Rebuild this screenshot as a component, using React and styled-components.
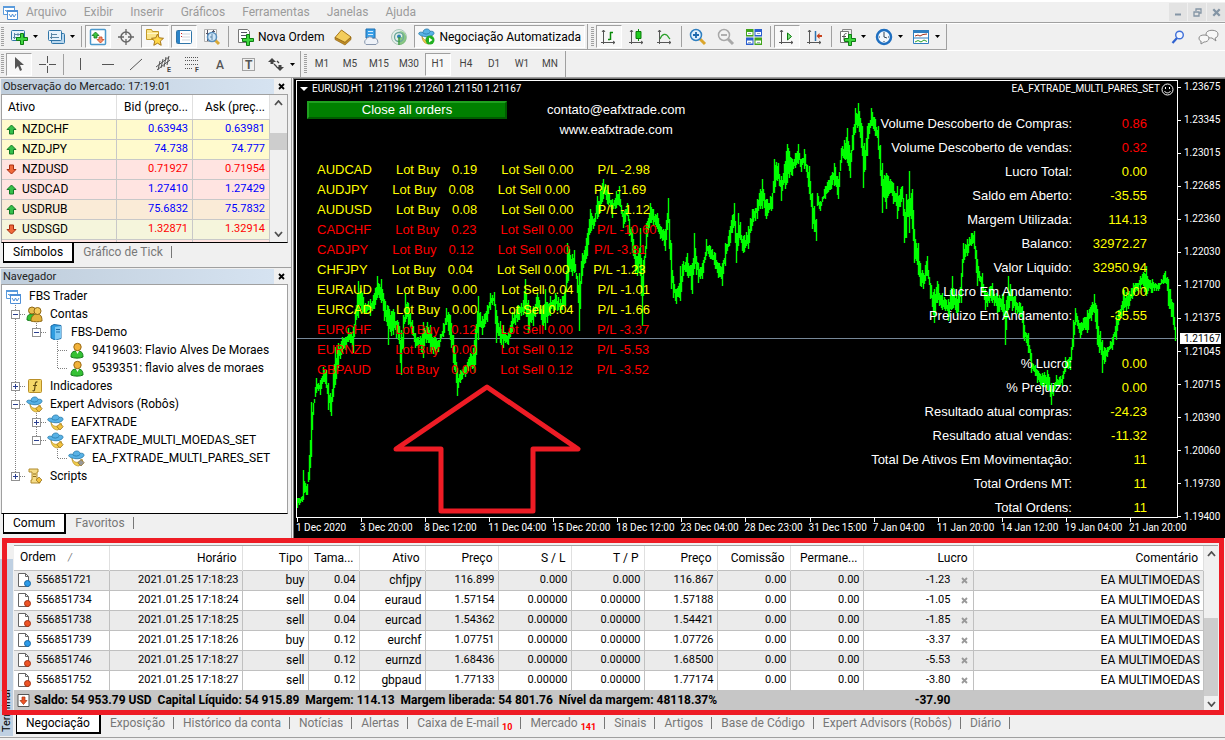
import React, { useState } from 'react';
import styled, { createGlobalStyle, css } from 'styled-components';

const GlobalStyle = createGlobalStyle`
  * { box-sizing: border-box; }
  body {
    margin: 0;
    background: #f0f0f0;
    color: #000;
    font-family: Roboto, 'Open Sans', sans-serif;
    font-size: 12px;
    line-height: 18px;
  }
  button {
    font: inherit;
    color: inherit;
    background: none;
    border: none;
    padding: 0;
    cursor: default;
  }
  ul { list-style: none; margin: 0; padding: 0; }
  svg { display: block; flex-shrink: 0; }
`;

const Window = styled.div`
  display: flex;
  flex-direction: column;
  min-height: 100vh;
  border-top: 2px solid #fff;
  overflow: hidden;
`;

/* menu */

const MenuBar = styled.nav`
  display: flex;
  align-items: center;
  height: 21px;
  padding-left: 3px;
  border-bottom: 1px solid #a0a0a0;
`;

const MenuItem = styled.button`
  color: #9b9b9b;
  margin-left: ${({ $first }) => ($first ? '8px' : '17px')};
`;

const WindowButtons = styled.div`
  display: flex;
  gap: 1px;
  margin-left: auto;
  button {
    display: flex;
    align-items: center;
    justify-content: center;
    width: 18px;
    height: 18px;
    background: #e3e3e3;
  }
`;

/* toolbars */

const ToolRow = styled.div`
  display: flex;
  align-items: center;
  height: 27px;
  border-top: 1px solid #fff;
`;

const ToolBar = styled.div`
  display: flex;
  align-items: center;
  height: 26px;
  gap: 2px;
  padding: 0 2px 0 4px;
  border-right: 1px solid #a0a0a0;
  border-bottom: ${({ $line }) => ($line ? '1px solid #a0a0a0' : 'none')};
  & + & { padding-left: 6px; }
`;

const Grip = styled.span`
  width: 3px;
  height: 20px;
  margin-left: -3px;
  background: repeating-linear-gradient(#a0a0a0 0 1px, #f0f0f0 1px 2px);
`;

const ToolButton = styled.button`
  display: flex;
  align-items: center;
  justify-content: center;
  gap: 4px;
  height: 23px;
  min-width: 26px;
  padding: 0 3px;
  border: 1px solid transparent;
  ${({ $drop }) => $drop && css`
    width: 35px;
    gap: 5px;
  `}
  ${({ $pressed }) => $pressed && css`
    background: #f8f8f8;
    border-color: #a0a0a0 #fff #fff #a0a0a0;
  `}
  ${({ $small }) => $small && css`
    font-size: 10px;
    color: #444;
  `}
`;

const Divider = styled.span`
  width: 1px;
  height: 21px;
  margin: 0 1px;
  background: #a0a0a0;
`;

const ToolRight = styled.div`
  display: flex;
  align-items: center;
  gap: 13px;
  margin-left: auto;
  padding-right: 6px;
`;

/* workspace */

const Workspace = styled.div`
  display: grid;
  grid-template-columns: 292px minmax(0, 1fr);
  flex: 1;
  border-top: 1px solid #a0a0a0;
`;

const SideColumn = styled.div`
  display: flex;
  flex-direction: column;
  border-right: 1px solid #a0a0a0;
`;

const Panel = styled.section`
  display: flex;
  flex-direction: column;
  flex: ${({ $grow }) => ($grow ? 1 : 'none')};
  padding: 1px 3px 2px 1px;
  border-top: ${({ $grow }) => ($grow ? '1px solid #a0a0a0' : 'none')};
`;

const PanelTitle = styled.header`
  display: flex;
  align-items: center;
  justify-content: space-between;
  height: 15px;
  background: linear-gradient(90deg, #bfcddb, #d7e4f2);
  h2 { margin: 0; padding-left: 2px; font-size: 11px; font-weight: 400; color: #222; }
  button {
    display: flex;
    align-items: center;
    justify-content: center;
    width: 14px;
    height: 15px;
    background: #f0f0f0;
  }
`;

const PanelBody = styled.div`
  display: flex;
  align-items: flex-start;
  flex: ${({ $fixed }) => ($fixed ? 'none' : 1)};
  background: #fff;
  border: 1px solid #a0a0a0;
  border-bottom-color: #000;
  overflow: hidden;
`;

const MarketBody = styled(PanelBody)`
  height: 149px;
`;

const MarketTable = styled.table`
  flex: 1;
  border-collapse: collapse;
  table-layout: fixed;
  th {
    height: 24px;
    padding: 0 4px;
    font-weight: 400;
    text-align: right;
    border-right: 1px solid #e0e0e0;
    border-bottom: 1px solid #c8c8c8;
  }
  th:first-child { text-align: left; padding-left: 6px; }
  td {
    height: 20px;
    padding: 0 4px 0 0;
    border-right: 1px solid #c8c8c8;
    border-bottom: 1px solid #c8c8c8;
    text-align: right;
    font-size: 11px;
  }
  td:first-child { text-align: left; padding-left: 4px; font-size: 12px; }
`;

const MarketRow = styled.tr`
  background: ${({ $bg }) => $bg};
  color: ${({ $up }) => ($up ? '#0000ff' : '#ff0000')};
`;

const SymbolName = styled.span`
  display: flex;
  align-items: center;
  gap: 5px;
  color: #000;
`;

const ScrollBar = styled.div`
  display: flex;
  flex-direction: column;
  align-items: center;
  align-self: stretch;
  width: ${({ $w }) => $w}px;
  padding: 5px 0;
  background: #f0f0f0;
`;

const Thumb = styled.span`
  width: 100%;
  height: ${({ $h }) => $h}px;
  margin-top: ${({ $end }) => ($end ? 'auto' : '27px')};
  margin-bottom: ${({ $end }) => ($end ? '5px' : 'auto')};
  background: #cdcdcd;
`;

const TabRow = styled.div`
  display: flex;
  align-items: flex-start;
  height: 22px;
  padding-left: 2px;
  color: #777;
`;

const Tab = styled.button`
  height: ${({ $active }) => ($active ? '20px' : '18px')};
  padding: 0 9px;
  white-space: nowrap;
  ${({ $active }) => $active ? css`
    background: #fff;
    color: #000;
    border: 1px solid #000;
    border-top: none;
    border-right-width: 2px;
    border-bottom-width: 2px;
  ` : css`
    background: linear-gradient(#777, #777) right center / 1px 12px no-repeat;
  `}
  sub {
    color: #ff0000;
    font-size: 9px;
    font-weight: 700;
    line-height: 0;
    margin-left: 3px;
  }
`;

const Tree = styled.ul`
  flex: 1;
  min-height: 227px;
  padding-top: 2px;
`;

const TreeRow = styled.li`
  display: flex;
  align-items: center;
  height: 18px;
  padding-left: 3px;
  white-space: nowrap;
`;

const TreeIcon = styled.span`
  display: flex;
  justify-content: center;
  width: 17px;
  margin-right: 7px;
`;

/* chart */

const ChartFrame = styled.section`
  display: grid;
  grid-template-columns: minmax(0, 1fr) 47px;
  grid-template-rows: 1fr 20px;
  margin-left: 1px;
  padding: 1px 0 0 2px;
  background: #000;
  border-top: 1px solid #777;
  border-left: 1px solid #777;
  color: #fff;
  font-size: 10px;
`;

const Plot = styled.div`
  position: relative;
  border: 1px solid #fff;
  > svg.price { width: 100%; height: 100%; position: absolute; inset: 0; }
`;

const ChartTitle = styled.div`
  position: absolute;
  top: 0;
  left: 3px;
  right: 3px;
  display: flex;
  align-items: center;
  gap: 4px;
  height: 16px;
  white-space: pre;
  .expert { margin-left: auto; display: flex; align-items: center; gap: 1px; }
`;

const CloseAll = styled.button`
  position: absolute;
  top: 20px;
  left: 10px;
  width: 200px;
  height: 18px;
  background: #008000;
  color: #fff;
  font: 13px/14px 'Liberation Sans', Arial, sans-serif;
  border: 2px solid;
  border-color: #20a020 #005c00 #005c00 #20a020;
`;

const Contact = styled.div`
  position: absolute;
  top: 19px;
  left: 250px;
  display: flex;
  flex-direction: column;
  align-items: center;
  font: 13px/20px 'Liberation Sans', Arial, sans-serif;
`;

const PairList = styled.ul`
  position: absolute;
  top: 79px;
  left: 20px;
  font: 13px/20px 'Liberation Sans', Arial, sans-serif;
`;

const PairItem = styled.li`
  display: flex;
  gap: 24px;
  white-space: nowrap;
  color: ${({ $red }) => ($red ? '#ff0000' : '#ffff00')};
  .lot { display: flex; gap: 12px; }
`;

const Summary = styled.dl`
  position: absolute;
  top: 31px;
  right: 30px;
  display: grid;
  grid-template-columns: auto 75px;
  margin: 0;
  text-align: right;
  font: 13px/24px 'Liberation Sans', Arial, sans-serif;
  dt { min-height: 24px; }
  dd { margin: 0; color: #ffff00; }
  dd.red { color: #ff0000; }
`;

const ArrowMark = styled.svg`
  position: absolute;
  left: 95px;
  bottom: 1px;
  width: 190px;
  height: 134px;
`;

const PriceAxis = styled.div`
  position: relative;
  display: flex;
  flex-direction: column;
  justify-content: space-between;
  margin-bottom: -6px;
  line-height: 14px;
  span { display: flex; align-items: center; gap: 3px; }
  span::before { content: ''; width: 3px; height: 1px; background: #fff; }
`;

const PriceTag = styled.b`
  position: absolute;
  top: 253px;
  left: 2px;
  width: 41px;
  padding-left: 4px;
  background: #fff;
  color: #000;
  font-weight: 400;
  line-height: 11px;
`;

const TimeAxis = styled.div`
  grid-column: 1 / -1;
  display: grid;
  grid-template-columns: repeat(14, 1fr);
  margin-right: 32px;
  white-space: nowrap;
  span::before { content: ''; display: block; width: 1px; height: 4px; margin-left: 1px; background: #fff; }
  span { line-height: 12px; }
`;

/* terminal */

const Terminal = styled.section`
  position: relative;
  display: flex;
  height: 200px;
  border-bottom: 1px solid #a0a0a0;
  margin-bottom: 2px;
`;

const RedFrame = styled.div`
  position: absolute;
  top: 0;
  left: 2px;
  right: 1px;
  height: 177px;
  border: 5px solid #ee1c25;
  pointer-events: none;
`;

const SideStrip = styled.h2`
  width: 13px;
  margin: 21px 1px 1px 0;
  padding: 4px 0;
  background: #bfd0e2;
  font-size: 11px;
  font-weight: 400;
  line-height: 13px;
  writing-mode: vertical-rl;
  transform: rotate(180deg);
`;

const TerminalMain = styled.div`
  flex: 1;
  display: flex;
  flex-direction: column;
  gap: 2px;
  min-width: 0;
  padding: 7px 7px 0 0;
`;

const TerminalBody = styled.div`
  display: flex;
  align-items: flex-start;
  height: 167px;
  background: #fff;
  border-top: 1px solid #a0a0a0;
`;

const OrdersTable = styled.table`
  flex: 1;
  min-width: 0;
  border-collapse: collapse;
  table-layout: fixed;
  text-align: right;
  white-space: nowrap;
  th {
    height: 24px;
    padding: 0 5px;
    font-weight: 400;
    overflow: hidden;
    border-right: 1px solid #e0e0e0;
  }
  th:first-child { text-align: left; padding-left: 6px; }
  td {
    height: 20px;
    padding: 0 3px;
    font-size: 11px;
    border-right: 1px solid #c0c0c0;
    border-top: 1px solid #c0c0c0;
  }
  td.word { font-size: 12px; }
  tbody tr:nth-child(odd) { background: #ebebeb; }
  tfoot td {
    background: #c6c6c6;
    border-color: #c6c6c6;
    font-size: 12px;
    font-weight: 700;
    text-align: left;
    white-space: pre;
  }
`;

const IconCell = styled.span`
  display: flex;
  align-items: center;
  gap: 4px;
`;

const ProfitCell = styled.span`
  display: flex;
  align-items: center;
  justify-content: flex-end;
  gap: 10px;
  padding-right: ${({ $total }) => ($total ? '19px' : '2px')};
`;

const SortMark = styled.i`
  margin-left: 12px;
  font-size: 10px;
  color: #777;
`;

/* icons */

const Icon = ({ w = 18, h = 18, children }) => (
  <svg width={w} height={h} viewBox={`0 0 ${w} ${h}`} fill="none" aria-hidden="true">{children}</svg>
);

const Caret = () => <Icon w={5} h={3}><path d="M0 0h5L2.500 3z" fill="#000" /></Icon>;

const PLUS = 'M4 0h3v4h4v3H7v4H4V7H0V4h4z';

const Plus = ({ x, y }) => (
  <path transform={`translate(${x} ${y})`} d={PLUS} fill="#3fd53f" stroke="#0d7d12" />
);

const LogoIcon = () => (
  <Icon w={15} h={15}>
    <path d="M.5 1.500h11v8H.5z" fill="#fff" stroke="#5b9bdc" />
    <path d="M0 2h12" stroke="#5b9bdc" strokeWidth="2" />
    <path d="M2 6l1-1 1 2" stroke="#5b9bdc" />
    <path d="M4.500 5.500h10v9h-10z" fill="#fff" stroke="#4f8fd6" />
    <path d="M4 6h11" stroke="#4f8fd6" strokeWidth="2" />
    <path d="M6 9l2 3 1.500-3 1.500 3 2-3" stroke="#4f8fd6" />
  </Icon>
);

const NewChartIcon = () => (
  <Icon>
    <rect x="1.500" y="2.500" width="13" height="10" rx="1" fill="#e9f3fb" stroke="#2f75a8" />
    <path d="M4.500 5v6M3 9.500h9M4 6.500h6M8 5v3" stroke="#5b86a5" />
    <Plus x={6.5} y={5.5} />
  </Icon>
);

const ProfilesIcon = () => (
  <Icon>
    <rect x="4.500" y="5.500" width="13" height="10" rx="1" fill="#b9d7ee" stroke="#2f75a8" />
    <rect x="1.500" y="2.500" width="13" height="10" rx="1" fill="#e9f3fb" stroke="#2f75a8" />
    <path d="M4.500 5v6M3 9.500h9M4 6.500h6" stroke="#5b86a5" />
  </Icon>
);

const MarketWatchIcon = () => (
  <Icon>
    <rect x="1.500" y="1.500" width="15" height="15" rx="1" fill="#fff" stroke="#4a98cc" strokeWidth="1.500" />
    <path d="M3 7.500L6.500 4 10 7.500H8V10H5V7.500z" fill="#3fc63f" stroke="#14711a" strokeWidth=".8" />
    <path d="M8 11.500h2V9h3v2.500h2L11.500 15z" fill="#f5906a" stroke="#c8401a" strokeWidth=".8" />
  </Icon>
);

const TargetIcon = () => (
  <Icon>
    <circle cx="9" cy="9" r="5" stroke="#666" strokeWidth="1.500" />
    <path d="M9 1v6M9 11v6M1 9h6M11 9h6" stroke="#666" strokeWidth="1.300" />
  </Icon>
);

const FolderStarIcon = () => (
  <Icon w={20}>
    <path d="M1.500 1.500h5l1 2h6v8h-12z" fill="#fbe58a" stroke="#c39a28" />
    <path d="M2 5.500h11" stroke="#fff6c8" />
    <path d="M12.500 6l1.700 3.800 4.300.5-3.200 2.800.9 4.200-3.700-2.100-3.700 2.100.9-4.200-3.200-2.800 4.300-.5z" fill="#ffd84a" stroke="#a8781a" />
  </Icon>
);

const DataWindowIcon = () => (
  <Icon>
    <rect x="1.500" y="2.500" width="15" height="13" rx="1" fill="#fff" stroke="#2f75a8" />
    <path d="M3.500 3v12" stroke="#2c84c8" strokeWidth="3" />
    <path d="M7 6h8M7 9h8M7 12h8" stroke="#cfd6dd" />
    <path d="M6 5.500h1M6 8.500h1" stroke="#d02020" />
  </Icon>
);

const TesterIcon = () => (
  <Icon>
    <path d="M1.500 1.500h12v12h-12z" fill="#fafafa" stroke="#b0b0b0" />
    <path d="M4.500 2v11M3 5.500h3M10.500 2v3M9 3.500h3" stroke="#556" />
    <path d="M12 12l4 4" stroke="#d8a838" strokeWidth="3" />
    <circle cx="9" cy="9" r="4.500" fill="#cfe6f8" stroke="#5a8fbd" strokeWidth="1.500" />
    <path d="M9 6v6M7 9h2" stroke="#5f86a8" />
  </Icon>
);

const NewOrderIcon = () => (
  <Icon>
    <path d="M2.500 1.500h9l2 2v11h-11z" fill="#fff" stroke="#777" />
    <path d="M5 4.500h6M5 7.500h6M5 10.500h3" stroke="#556" />
    <Plus x={6.5} y={6.5} />
  </Icon>
);

const BookIcon = () => (
  <Icon>
    <path d="M1 9.500L7.500 2 17 9l-6 5.500z" fill="#f3cd5c" stroke="#a5761b" />
    <path d="M1 9.500v2L11 17l6-5.500V9l-6 5.500z" fill="#c08c22" stroke="#94691a" strokeWidth=".7" />
  </Icon>
);

const CloudIcon = () => (
  <Icon>
    <path d="M4 1h9v9H4z" fill="#3aa0e8" stroke="#1c6eb0" />
    <path d="M6 3.500h5M6 6.500h5" stroke="#d5ecfd" />
    <path d="M4 16.500a3 3 0 010-5 4 4 0 017-1 3 3 0 013 6z" fill="#eef2f8" stroke="#8796ad" />
  </Icon>
);

const SignalIcon = () => (
  <Icon>
    <circle cx="9" cy="9" r="7.500" fill="#e4efe9" stroke="#a9c6b8" />
    <path d="M9 9l1 8c5-1 7-5 6-9-1-4-4-5-7-5 3 1 4 4 3 6z" fill="#72bd6c" opacity=".8" />
    <circle cx="9" cy="9" r="4.500" stroke="#6aa79a" strokeWidth="1.300" />
    <circle cx="9" cy="8.500" r="2" fill="#2f83b5" />
    <path d="M9 9v8" stroke="#3d9a3d" strokeWidth="1.500" />
  </Icon>
);

const HatIcon = ({ badge = '#f4c23c' }) => (
  <Icon w={17} h={17}>
    <path d="M4 8c1 5 7 6 10 1l1 3-4 4c-4 0-7-3-7-8z" fill="#f2cf4c" stroke="#b58a20" strokeWidth=".7" />
    <path d="M.7 5.500C1 3.800 3.500 4 5 4.500 5 0 12 0 12 3.500c2-.8 4.500.2 4 2C15 8.500 10 9 8 8.700 5 8.500 1 7.500.7 5.500z" fill="#58b2e6" stroke="#2477a8" strokeWidth=".8" />
    <path d="M5 5c2 1.500 5 1.500 7-.5" stroke="#2477a8" strokeWidth=".8" />
    {badge === 'play' ? (
      <>
        <circle cx="12" cy="12" r="4.500" fill="#22b022" />
        <path d="M11 9.500l3.500 2.500-3.500 2.500z" fill="#fff" />
      </>
    ) : (
      <path d="M13 9.500l3.200 3.200L13 16l-3.200-3.300z" fill={badge} stroke="#8c6a1c" strokeWidth=".7" />
    )}
  </Icon>
);

const AXES = 'M3.500 2v14M1 14.500h14M2 4l1.500-2L5 4M13 13l2 1.500-2 1.500';

const BarsIcon = () => (
  <Icon><path d={AXES} stroke="#555" /><path d="M10.500 4v8M10 4.500h3M8 11.500h2" stroke="#0a8a0a" strokeWidth="1.500" /></Icon>
);
const CandleIcon = () => (
  <Icon><path d={AXES} stroke="#555" /><path d="M10.500 1v12" stroke="#0a8a0a" /><path d="M8 3.500h5v7H8z" fill="#1ecb1e" stroke="#0a7a0a" /></Icon>
);
const LineIcon = () => (
  <Icon><path d={AXES} stroke="#555" /><path d="M4 11c2-5 6-7 9-1l1 1" stroke="#2ba02b" strokeWidth="1.200" /></Icon>
);
const ScrollIcon = () => (
  <Icon><path d={AXES} stroke="#555" /><path d="M9.500 5l4 3.500-4 3.500z" fill="#7fe07f" stroke="#0a7a0a" /></Icon>
);
const ShiftIcon = () => (
  <Icon><path d={AXES} stroke="#555" /><path d="M9.500 3v10" stroke="#2b72b0" strokeWidth="1.500" /><path d="M10.500 8l3-3v2H16v2h-2.500v2z" fill="#c8421c" /></Icon>
);

const ZoomIcon = ({ out }) => (
  <Icon>
    <path d="M11 11l5 5" stroke={out ? '#a8a8a8' : '#dba62c'} strokeWidth="3" />
    <circle cx="7" cy="7" r="5.500" fill={out ? '#f2f2f2' : '#dff0fd'} stroke={out ? '#a8a8a8' : '#2f7fc0'} strokeWidth="1.500" />
    <path d={out ? 'M4 7h6' : 'M4 7h6M7 4v6'} stroke={out ? '#a8a8a8' : '#1d68ad'} strokeWidth="1.800" />
  </Icon>
);

const TileIcon = () => (
  <Icon>
    <path d="M1 1h7.500v7.500H1zM9.500 9.500H17V17H9.500z" fill="#41a51c" />
    <path d="M9.500 1H17v7.500H9.500zM1 9.500h7.500V17H1z" fill="#2b5fcf" />
    <path d="M2 4h5.500v3H2zM10.500 4H16v3h-5.500zM2 12.500h5.500v3H2zM10.500 12.500H16v3h-5.500z" fill="#fff" />
    <path d="M3 5.500h3M12 5.500h3M3 14.500h3M12 14.500h3" stroke="#9ab" />
  </Icon>
);

const IndicatorsIcon = () => (
  <Icon>
    <path d="M4.500 1.500h9v12h-9z" fill="#eee" stroke="#888" />
    <path d="M2.500 3.500h8v11h-8z" fill="#fff" stroke="#777" />
    <path d="M8.500 5.500c-2 0-2.500 1-2.500 3v4M4 8.500h4" stroke="#555" />
    <Plus x={6.5} y={6.5} />
  </Icon>
);

const ClockIcon = () => (
  <Icon>
    <circle cx="9" cy="9" r="7" fill="#f3f8fd" stroke="#1f6fc0" strokeWidth="2.500" />
    <path d="M9 5v4l3 1M9 4v1M9 13v1M4 9h1M13 9h1" stroke="#345" />
  </Icon>
);

const TemplateIcon = () => (
  <Icon>
    <path d="M1.500 2.500h15v13h-15z" fill="#fff" stroke="#2f7fc0" />
    <path d="M1 3.500h16" stroke="#2f7fc0" strokeWidth="3" />
    <path d="M1 10h16" stroke="#2f7fc0" />
    <path d="M3 8l3-1 2 1 3-1.500 4-.5" stroke="#a03018" />
    <path d="M3 14l3-1.500 3 1.500 3-2 3 1.500" stroke="#2ba02b" />
  </Icon>
);

const SearchIcon = () => (
  <Icon w={14} h={14}>
    <path d="M6 8l-4.500 5" stroke="#2f62d0" strokeWidth="2.200" />
    <circle cx="8.500" cy="5" r="3.800" fill="#f2f6ff" stroke="#3f6fd8" strokeWidth="1.400" />
  </Icon>
);

const ChatIcon = () => (
  <Icon w={21} h={16}>
    <path d="M8 5c0-5 12-5 12 0 0 3-2 4-3 4l1 3-4-3c-4 0-6-1-6-4z" fill="#f7f7f7" stroke="#8a8a8a" />
    <path d="M1 9c0-4 10-4 10 0 0 3-3 4-5 4l-3 2v-3c-1 0-2-1-2-3z" fill="#f7f7f7" stroke="#8a8a8a" />
  </Icon>
);

const DRAW = {
  cursor: <path d="M5 2v12l3-3 2 5 2-1-2-5h4z" fill="#555" />,
  cross: <path d="M9.500 1v7M9.500 11v7M1 9.500h7M11 9.500h7" stroke="#555" />,
  vline: <path d="M9.500 3v12" stroke="#555" />,
  hline: <path d="M3 9.500h12" stroke="#555" />,
  trend: <path d="M3 15L15 4" stroke="#555" />,
  channel: (
    <>
      <path d="M1 12L14 2M2 15L15 5M5 6l-2 9M8 4L6 13M11 2L9 12M14 1l-2 9" stroke="#555" />
      <text x="12" y="17" fontSize="7" fontWeight="700" fill="#444">E</text>
    </>
  ),
  fibo: (
    <>
      <path d="M2 2.500h13M2 5.500h13M2 9.500h13M2 13.500h8" stroke="#555" strokeDasharray="1 1" />
      <text x="12" y="17" fontSize="7" fontWeight="700" fill="#444">F</text>
    </>
  ),
  text: <text x="5" y="14" fontSize="12" fontWeight="500" fill="#555">A</text>,
  label: (
    <>
      <path d="M3.500 3.500h12v12h-12z" stroke="#555" strokeDasharray="1 1" />
      <text x="6" y="14" fontSize="12" fontWeight="700" fill="#555">T</text>
    </>
  ),
  arrows: (
    <>
      <path d="M5 3l4 4H6.500v2h-3V7H1z" fill="#444" />
      <path d="M9 12h2.500v-2h3v2H17l-4 4z" fill="#444" />
      <path d="M7 9l3 3M10 6l2 2" stroke="#444" strokeWidth="1.300" />
    </>
  ),
};

const DrawIcon = ({ kind }) => <Icon>{DRAW[kind]}</Icon>;

const TrendArrow = ({ up }) => (
  <Icon w={11} h={11}>
    {up
      ? <path d="M5.500 1L10 5.500H7.500V10h-4V5.500H1z" fill="#35c04a" stroke="#147a26" />
      : <path d="M5.500 10L10 5.500H7.500V1h-4v4.500H1z" fill="#f0693a" stroke="#a82f12" />}
  </Icon>
);

const Cross = ({ size = 7, color = '#000' }) => (
  <svg width={size} height={size} viewBox="0 0 7 7"><path d="M1 1l5 5M6 1L1 6" stroke={color} strokeWidth="1.800" /></svg>
);

const Chevron = ({ up }) => (
  <Icon w={9} h={6}><path d={up ? 'M1 5l3.500-4L8 5' : 'M1 1l3.500 4L8 1'} stroke="#505050" strokeWidth="1.800" /></Icon>
);

const UserIcon = () => (
  <Icon w={14} h={17}>
    <path d="M1 15c0-4 1-6 6-6s6 2 6 6c-3 1.500-9 1.500-12 0z" fill="#35c135" stroke="#127a18" />
    <path d="M6 9l1.500 3L9 9z" fill="#fff" />
    <circle cx="7.500" cy="5" r="3.700" fill="#f2b23a" stroke="#9a6a14" />
  </Icon>
);

const UsersIcon = () => (
  <Icon w={17} h={17}>
    <path d="M1 14c0-4 1-6 5-6s5 2 5 6c-3 1-7 1-10 0z" fill="#35c135" stroke="#127a18" />
    <path d="M5 15c0-4 2-7 6-7s5 3 5 7c-3 1-8 1-11 0z" fill="#e3b23c" stroke="#8e6712" />
    <circle cx="6" cy="4.500" r="3.500" fill="#e8bd50" stroke="#8e6712" />
    <circle cx="11.500" cy="5" r="3.500" fill="#f4ca5c" stroke="#8e6712" />
  </Icon>
);

const ServerIcon = () => (
  <Icon w={16} h={16}>
    <path d="M3 2l3-1.500 7 1v13L7 16l-4-2z" fill="#2f9de0" stroke="#1a6ba8" />
    <path d="M7 3l6-1v12l-6 2z" fill="#7cc8f4" />
    <path d="M8 5.500h4M8 8h4" stroke="#1a6ba8" />
  </Icon>
);

const FunctionIcon = () => (
  <Icon w={16} h={16}>
    <rect x="1.500" y="1.500" width="13" height="13" rx="1" fill="#f5d768" stroke="#b98f28" />
    <path d="M10.500 4c-3-.5-2 3-3 8-.3 1-1 1-2 .5M6 7.500h4" stroke="#5f4a10" strokeWidth="1.200" />
  </Icon>
);

const ScriptIcon = () => (
  <Icon w={16} h={16}>
    <path d="M2 1h9v3h-1v8h3v3H4v-3h1V4H2z" fill="#f5dc88" stroke="#b08a2c" />
    <path d="M6 6h3M6 8.500h3" stroke="#8c6a1c" />
    <path d="M12 9l3 3-3 3-3-3z" fill="#f4c23c" stroke="#8c6a1c" strokeWidth=".7" />
  </Icon>
);

const OrderIcon = ({ buy }) => (
  <Icon w={15} h={16}>
    <path d="M1.500 1.500h7l3 3v10h-10z" fill="#fff" stroke="#666" />
    <path d="M8.500 1.500v3h3" stroke="#666" />
    <circle cx="10.500" cy="11.500" r="3" fill={buy ? '#2d9be8' : '#ee5426'} stroke={buy ? '#1767a5' : '#a5300e'} />
  </Icon>
);

const BalanceIcon = () => (
  <Icon w={13} h={15}>
    <path d="M1 1.500h11v12H1z" fill="#fff" stroke="#555" />
    <path d="M6.500 11.500l3.500-4H8V4H5v3.500H3z" fill="#ee5426" stroke="#a5300e" strokeWidth=".7" />
  </Icon>
);

const Smiley = () => (
  <Icon w={13} h={13}>
    <circle cx="6.500" cy="6.500" r="5.500" stroke="#fff" />
    <path d="M4.500 4v2M8.500 4v2M3.500 8c1 2.500 5 2.500 6 0" stroke="#fff" />
  </Icon>
);

/* guide cell kinds: v = pass through, t = tee, l = last, a leading + or - adds the expander box */
const Guide = ({ kind }) => (
  <Icon w={21}>
    <g stroke="#808080" strokeDasharray="1 1">
      {kind && <path d={kind.includes('l') ? 'M10.500 0v9' : 'M10.500 0v18'} />}
      {/[tl]/.test(kind) && <path d="M11 9.500h10" />}
    </g>
    {/[+-]/.test(kind) && (
      <>
        <rect x="6.500" y="5.500" width="8" height="8" fill="#fff" stroke="#919191" />
        <path d={kind.includes('+') ? 'M8 9.500h5M10.500 7v5' : 'M8 9.500h5'} stroke="#2a3f8f" />
      </>
    )}
  </Icon>
);

/* data */

const menus = ['Arquivo', 'Exibir', 'Inserir', 'Gráficos', 'Ferramentas', 'Janelas', 'Ajuda'];
const periods = ['M1', 'M5', 'M15', 'M30', 'H1', 'H4', 'D1', 'W1', 'MN'];

const quotes = [
  ['NZDCHF', '0.63943', '0.63981', true, '#fffacd'],
  ['NZDJPY', '74.738', '74.777', true, '#fffacd'],
  ['NZDUSD', '0.71927', '0.71954', false, '#ffe4e1'],
  ['USDCAD', '1.27410', '1.27429', true, '#ffe4e1'],
  ['USDRUB', '75.6832', '75.7832', true, '#faebd7'],
  ['USDSGD', '1.32871', '1.32914', false, '#f5f5dc'],
];

const tree = [
  { guides: [], icon: <LogoIcon />, label: 'FBS Trader' },
  { guides: ['-t'], icon: <UsersIcon />, label: 'Contas' },
  { guides: ['v', '-l'], icon: <ServerIcon />, label: 'FBS-Demo' },
  { guides: ['v', '', 't'], icon: <UserIcon />, label: '9419603: Flavio Alves De Moraes' },
  { guides: ['v', '', 'l'], icon: <UserIcon />, label: '9539351: flavio alves de moraes' },
  { guides: ['+t'], icon: <FunctionIcon />, label: 'Indicadores' },
  { guides: ['-t'], icon: <HatIcon />, label: 'Expert Advisors (Robôs)' },
  { guides: ['v', '+t'], icon: <HatIcon />, label: 'EAFXTRADE' },
  { guides: ['v', '-l'], icon: <HatIcon />, label: 'EAFXTRADE_MULTI_MOEDAS_SET' },
  { guides: ['v', '', 'l'], icon: <HatIcon badge="#9a9a9a" />, label: 'EA_FXTRADE_MULTI_PARES_SET' },
  { guides: ['+l'], icon: <ScriptIcon />, label: 'Scripts' },
];

const pairs = [
  ['AUDCAD', '0.19', '0.00', '-2.98'],
  ['AUDJPY', '0.08', '0.00', '-1.69'],
  ['AUDUSD', '0.08', '0.00', '-1.12'],
  ['CADCHF', '0.23', '0.00', '-10.60', true],
  ['CADJPY', '0.12', '0.00', '-3.81', true],
  ['CHFJPY', '0.04', '0.00', '-1.23'],
  ['EURAUD', '0.00', '0.04', '-1.01'],
  ['EURCAD', '0.00', '0.04', '-1.66'],
  ['EURCHF', '0.12', '0.00', '-3.37', true],
  ['EURNZD', '0.00', '0.12', '-5.53', true],
  ['GBPAUD', '0.00', '0.12', '-3.52', true],
];

const summary = [
  ['Volume Descoberto de Compras:', '0.86', 'red'],
  ['Volume Descoberto de vendas:', '0.32', 'red'],
  ['Lucro Total:', '0.00'],
  ['Saldo em Aberto:', '-35.55'],
  ['Margem Utilizada:', '114.13'],
  ['Balanco:', '32972.27'],
  ['Valor Liquido:', '32950.94'],
  ['Lucro Em Andamento:', '0.00'],
  ['Prejuizo Em Andamento:', '-35.55'],
  ['', ''],
  ['% Lucro:', '0.00'],
  ['% Prejuizo:', '0.00'],
  ['Resultado atual compras:', '-24.23'],
  ['Resultado atual vendas:', '-11.32'],
  ['Total De Ativos Em Movimentação:', '11'],
  ['Total Ordens MT:', '11'],
  ['Total Ordens:', '11'],
];

const prices = ['1.23675', '1.23345', '1.23015', '1.22685', '1.22360', '1.22030', '1.21700',
  '1.21375', '1.21045', '1.20715', '1.20390', '1.20060', '1.19730', '1.19400'];

const times = ['1 Dec 2020', '3 Dec 20:00', '8 Dec 12:00', '11 Dec 04:00', '15 Dec 20:00',
  '18 Dec 12:00', '23 Dec 04:00', '28 Dec 23:00', '31 Dec 15:00', '7 Jan 04:00',
  '11 Jan 20:00', '14 Jan 12:00', '19 Jan 04:00', '21 Jan 20:00'];

/* x, high, low of the hourly range */
const series = [
  [297, 498, 508], [302, 496, 502], [303, 470, 500], [307, 484, 495], [309, 455, 480], [311, 402, 457],
  [313, 403, 415], [316, 378, 393], [320, 380, 395], [323, 367, 382], [326, 370, 388], [328, 383, 410],
  [331, 397, 416], [333, 370, 397], [335, 347, 385], [338, 343, 368], [342, 337, 353], [345, 337, 350],
  [348, 328, 342], [353, 327, 353], [355, 309, 326], [358, 281, 318], [362, 293, 313], [365, 303, 313],
  [370, 299, 316], [374, 293, 309], [377, 276, 298], [381, 279, 303], [384, 299, 321], [388, 306, 345],
  [393, 309, 335], [398, 322, 340], [401, 330, 375], [403, 315, 350], [405, 293, 322], [408, 303, 325],
  [412, 320, 335], [415, 333, 348], [418, 337, 348], [423, 322, 358], [427, 322, 340], [430, 325, 352],
  [435, 337, 355], [438, 340, 352], [443, 323, 337], [446, 308, 325], [450, 315, 340], [453, 335, 363],
  [457, 368, 396], [460, 370, 383], [465, 366, 377], [470, 353, 367], [474, 340, 373], [478, 296, 340],
  [482, 316, 335], [487, 305, 322], [490, 293, 310], [494, 292, 306], [496, 310, 343], [503, 325, 348],
  [508, 332, 345], [512, 312, 332], [517, 306, 322], [523, 300, 315], [525, 279, 309], [528, 300, 333],
  [533, 306, 326], [537, 293, 309], [542, 306, 325], [545, 289, 330], [550, 296, 316], [555, 293, 310],
  [560, 299, 313], [565, 289, 306], [567, 243, 283], [572, 254, 276], [574, 250, 273], [577, 276, 293],
  [579, 273, 331], [582, 253, 276], [587, 233, 256], [590, 209, 233], [593, 219, 229], [597, 196, 219],
  [600, 189, 213], [603, 179, 199], [607, 186, 204], [612, 199, 218], [616, 191, 208], [619, 186, 206],
  [623, 213, 228], [627, 203, 216], [629, 219, 236], [632, 229, 253], [635, 246, 273], [637, 256, 276],
  [640, 228, 276], [642, 276, 326], [643, 260, 296], [646, 223, 249], [650, 203, 223], [653, 209, 226],
  [657, 213, 229], [660, 226, 239], [665, 229, 251], [668, 198, 223], [669, 219, 249], [671, 243, 289],
  [673, 276, 298], [676, 289, 304], [680, 266, 301], [683, 261, 276], [687, 253, 276], [692, 263, 294],
  [694, 233, 269], [698, 263, 283], [702, 263, 279], [706, 239, 256], [710, 246, 259], [715, 253, 269],
  [718, 263, 278], [722, 263, 286], [725, 243, 266], [730, 226, 243], [734, 203, 226], [736, 233, 263],
  [738, 213, 246], [743, 236, 253], [748, 226, 249], [752, 209, 226], [757, 199, 219], [762, 179, 209],
  [766, 199, 219], [772, 193, 209], [774, 159, 193], [778, 163, 179], [781, 176, 201], [787, 144, 183],
  [792, 159, 176], [798, 144, 164], [801, 159, 172], [804, 149, 169], [809, 166, 194], [812, 193, 229],
  [816, 219, 241], [817, 193, 206], [820, 201, 211], [825, 186, 199], [830, 176, 190], [834, 163, 186],
  [838, 179, 199], [841, 148, 163], [847, 128, 163], [850, 153, 178], [855, 108, 133], [858, 103, 126],
  [862, 126, 156], [863, 146, 188], [867, 126, 156], [871, 108, 126], [875, 119, 136], [878, 126, 150],
  [882, 163, 213], [886, 173, 209], [890, 179, 193], [897, 186, 219], [902, 186, 199], [904, 209, 243],
  [909, 171, 233], [912, 189, 229], [914, 229, 263], [918, 243, 275], [920, 263, 286], [923, 273, 289],
  [927, 256, 276], [930, 283, 299], [934, 289, 323], [937, 281, 303], [942, 293, 310], [948, 299, 321],
  [952, 276, 309], [957, 299, 316], [961, 273, 303], [963, 243, 263], [967, 239, 256], [971, 233, 246],
  [974, 231, 249], [977, 259, 286], [982, 273, 293], [985, 289, 310], [992, 283, 303], [997, 296, 313],
  [1003, 293, 316], [1005, 310, 345], [1008, 276, 310], [1015, 296, 313], [1022, 306, 323], [1023, 318, 338],
  [1028, 333, 353], [1031, 353, 373], [1037, 370, 383], [1042, 373, 387], [1047, 370, 390], [1051, 383, 405],
  [1056, 375, 387], [1062, 375, 387], [1065, 357, 372], [1070, 357, 370], [1073, 320, 347], [1075, 308, 325],
  [1080, 323, 338], [1087, 310, 333], [1094, 294, 313], [1097, 309, 345], [1102, 340, 373], [1107, 347, 357],
  [1112, 337, 350], [1116, 315, 340], [1118, 310, 325], [1123, 289, 316], [1128, 293, 309], [1133, 283, 296],
  [1140, 276, 289], [1146, 266, 296], [1152, 279, 293], [1158, 283, 291], [1165, 271, 283], [1168, 279, 306],
  [1173, 303, 325], [1175, 327, 341],
];

const pricePath = () => {
  let d = '';
  let seed = 7;
  const rnd = () => {
    seed = (seed * 16807) % 2147483647;
    return seed / 2147483647;
  };
  for (let i = 0; i < series.length - 1; i++) {
    const [x0, h0, l0] = series[i];
    const [x1, h1, l1] = series[i + 1];
    d += `M${x0 + 0.5} ${h0}V${l0}`;
    for (let x = x0 + 1; x < x1; x++) {
      const t = (x - x0) / (x1 - x0);
      const hi = h0 + (h1 - h0) * t;
      const lo = l0 + (l1 - l0) * t;
      const room = (lo - hi) * 0.4;
      d += `M${x + 0.5} ${Math.round(hi + rnd() * room)}V${Math.round(lo - rnd() * room)}`;
    }
  }
  return `${d}M1175.5 327V341`;
};

const columns = [
  ['Ordem', 95], ['Horário', 133], ['Tipo', 66], ['Tama...', 51], ['Ativo', 66], ['Preço', 73], ['S / L', 73],
  ['T / P', 73], ['Preço', 73], ['Comissão', 73], ['Permane...', 73], ['Lucro', 110], ['Comentário'],
];

const orders = [
  ['556851721', '23', 'buy', '0.04', 'chfjpy', '116.899', '0.000', '116.867', '-1.23'],
  ['556851734', '24', 'sell', '0.04', 'euraud', '1.57154', '0.00000', '1.57188', '-1.05'],
  ['556851738', '25', 'sell', '0.04', 'eurcad', '1.54362', '0.00000', '1.54421', '-1.85'],
  ['556851739', '26', 'buy', '0.12', 'eurchf', '1.07751', '0.00000', '1.07726', '-3.37'],
  ['556851746', '27', 'sell', '0.12', 'eurnzd', '1.68436', '0.00000', '1.68500', '-5.53'],
  ['556851752', '27', 'sell', '0.12', 'gbpaud', '1.77133', '0.00000', '1.77174', '-3.80'],
];

const terminalTabs = [
  ['Negociação'], ['Exposição'], ['Histórico da conta'], ['Notícias'], ['Alertas'], ['Caixa de E-mail', 10],
  ['Mercado', 141], ['Sinais'], ['Artigos'], ['Base de Código'], ['Expert Advisors (Robôs)'], ['Diário'],
];

/* sections */

const MainToolbar = () => (
  <ToolRow>
    <ToolBar $line>
      <Grip />
      <ToolButton $drop aria-label="Novo gráfico"><NewChartIcon /><Caret /></ToolButton>
      <ToolButton $drop aria-label="Perfis"><ProfilesIcon /><Caret /></ToolButton>
      <Divider />
      <ToolButton $pressed aria-label="Observação do Mercado"><MarketWatchIcon /></ToolButton>
      <ToolButton aria-label="Mira"><TargetIcon /></ToolButton>
      <ToolButton $pressed aria-label="Navegador"><FolderStarIcon /></ToolButton>
      <ToolButton $pressed aria-label="Terminal"><DataWindowIcon /></ToolButton>
      <ToolButton aria-label="Testador"><TesterIcon /></ToolButton>
      <Divider />
      <ToolButton><NewOrderIcon />Nova Ordem</ToolButton>
      <ToolButton aria-label="MetaEditor"><BookIcon /></ToolButton>
      <ToolButton aria-label="VPS"><CloudIcon /></ToolButton>
      <ToolButton aria-label="Sinais"><SignalIcon /></ToolButton>
      <ToolButton $pressed><HatIcon badge="play" />Negociação Automatizada</ToolButton>
    </ToolBar>
    <ToolBar $line>
      <Grip />
      <ToolButton $pressed aria-label="Barras"><BarsIcon /></ToolButton>
      <ToolButton aria-label="Velas"><CandleIcon /></ToolButton>
      <ToolButton aria-label="Linha"><LineIcon /></ToolButton>
      <Divider />
      <ToolButton aria-label="Mais zoom"><ZoomIcon /></ToolButton>
      <ToolButton aria-label="Menos zoom"><ZoomIcon out /></ToolButton>
      <ToolButton aria-label="Lado a lado"><TileIcon /></ToolButton>
      <Divider />
      <ToolButton $pressed aria-label="Rolagem"><ScrollIcon /></ToolButton>
      <ToolButton aria-label="Deslocar"><ShiftIcon /></ToolButton>
      <Divider />
      <ToolButton $drop aria-label="Indicadores"><IndicatorsIcon /><Caret /></ToolButton>
      <ToolButton $drop aria-label="Períodos"><ClockIcon /><Caret /></ToolButton>
      <ToolButton $drop aria-label="Modelos"><TemplateIcon /><Caret /></ToolButton>
    </ToolBar>
    <ToolRight>
      <button aria-label="Buscar"><SearchIcon /></button>
      <button aria-label="Chat"><ChatIcon /></button>
    </ToolRight>
  </ToolRow>
);

const DrawToolbar = () => {
  const [period, setPeriod] = useState('H1');
  return (
    <ToolRow>
      <ToolBar>
        <Grip />
        <ToolButton $pressed aria-label="Cursor"><DrawIcon kind="cursor" /></ToolButton>
        <ToolButton aria-label="Cruz"><DrawIcon kind="cross" /></ToolButton>
        <Divider />
        {['vline', 'hline', 'trend', 'channel', 'fibo', 'text', 'label'].map(kind => (
          <ToolButton key={kind} aria-label={kind}><DrawIcon kind={kind} /></ToolButton>
        ))}
        <ToolButton $drop aria-label="Setas"><DrawIcon kind="arrows" /><Caret /></ToolButton>
      </ToolBar>
      <ToolBar>
        <Grip />
        {periods.map(p => (
          <ToolButton key={p} $small $pressed={p === period} onClick={() => setPeriod(p)}>{p}</ToolButton>
        ))}
      </ToolBar>
    </ToolRow>
  );
};

const MarketWatch = () => (
  <Panel>
    <PanelTitle>
      <h2>Observação do Mercado: 17:19:01</h2>
      <button aria-label="Fechar"><Cross /></button>
    </PanelTitle>
    <MarketBody $fixed>
      <MarketTable>
        <colgroup><col /><col style={{ width: 76 }} /><col style={{ width: 77 }} /></colgroup>
        <thead>
          <tr><th>Ativo</th><th>Bid (preço...</th><th>Ask (preç...</th></tr>
        </thead>
        <tbody>
          {quotes.map(([name, bid, ask, up, bg]) => (
            <MarketRow key={name} $up={up} $bg={bg}>
              <td><SymbolName><TrendArrow up={up} />{name}</SymbolName></td>
              <td>{bid}</td>
              <td>{ask}</td>
            </MarketRow>
          ))}
          <MarketRow $bg="#ffe4e1"><td /><td /><td /></MarketRow>
        </tbody>
      </MarketTable>
      <ScrollBar $w={17}><Chevron up /><Thumb $h={17} /><Chevron /></ScrollBar>
    </MarketBody>
    <TabRow>
      <Tab $active>Símbolos</Tab>
      <Tab>Gráfico de Tick</Tab>
    </TabRow>
  </Panel>
);

const Navigator = () => (
  <Panel $grow>
    <PanelTitle>
      <h2>Navegador</h2>
      <button aria-label="Fechar"><Cross /></button>
    </PanelTitle>
    <PanelBody>
      <Tree>
        {tree.map(({ guides, icon, label }) => (
          <TreeRow key={label}>
            {guides.map((g, i) => <Guide key={i} kind={g} />)}
            <TreeIcon>{icon}</TreeIcon>
            {label}
          </TreeRow>
        ))}
      </Tree>
    </PanelBody>
    <TabRow>
      <Tab $active>Comum</Tab>
      <Tab>Favoritos</Tab>
    </TabRow>
  </Panel>
);

const Chart = () => (
  <ChartFrame>
    <Plot>
      <svg className="price" viewBox="297 81 880 436" preserveAspectRatio="none">
        <path d="M297 338.500H1177" stroke="#778899" />
        <path d={pricePath()} stroke="#00ff00" strokeWidth="1.400" />
      </svg>
      <ChartTitle>
        <Icon w={8} h={4}><path d="M0 0h8L4 4z" fill="#fff" /></Icon>
        <span>EURUSD,H1  1.21196 1.21260 1.21150 1.21167</span>
        <span className="expert">EA_FXTRADE_MULTI_PARES_SET<Smiley /></span>
      </ChartTitle>
      <CloseAll>Close all orders</CloseAll>
      <Contact>
        <span>contato@eafxtrade.com</span>
        <span>www.eafxtrade.com</span>
      </Contact>
      <PairList>
        {pairs.map(([name, buy, sell, pl, red]) => (
          <PairItem key={name} $red={red}>
            <span>{name}</span>
            <span className="lot"><span>Lot Buy</span><span>{buy}</span></span>
            <span>Lot Sell {sell}</span>
            <span>P/L {pl}</span>
          </PairItem>
        ))}
      </PairList>
      <Summary>
        {summary.map(([label, value, tone], i) => (
          <React.Fragment key={i}>
            <dt>{label}</dt>
            <dd className={tone}>{value}</dd>
          </React.Fragment>
        ))}
      </Summary>
      <ArrowMark viewBox="0 0 190 134" fill="none">
        <path d="M95 5L186 67H141V129H49V67H4z" stroke="#ee1c25" strokeWidth="5" strokeLinejoin="round" />
      </ArrowMark>
    </Plot>
    <PriceAxis>
      {prices.map(p => <span key={p}>{p}</span>)}
      <PriceTag>1.21167</PriceTag>
    </PriceAxis>
    <TimeAxis>
      {times.map(t => <span key={t}>{t}</span>)}
    </TimeAxis>
  </ChartFrame>
);

const TerminalPanel = () => {
  const [tab, setTab] = useState('Negociação');
  return (
    <Terminal>
      <SideStrip>Terminal</SideStrip>
      <TerminalMain>
        <TerminalBody>
          <OrdersTable>
            <colgroup>
              {columns.map(([name, width], i) => <col key={i} style={{ width }} />)}
            </colgroup>
            <thead>
              <tr>
                {columns.map(([name], i) => (
                  <th key={i}>{name}{i === 0 && <SortMark>/</SortMark>}</th>
                ))}
              </tr>
            </thead>
            <tbody>
              {orders.map(([id, sec, type, size, symbol, open, stop, price, profit]) => (
                <tr key={id}>
                  <td><IconCell><OrderIcon buy={type === 'buy'} />{id}</IconCell></td>
                  <td>2021.01.25 17:18:{sec}</td>
                  <td className="word">{type}</td>
                  <td>{size}</td>
                  <td className="word">{symbol}</td>
                  <td>{open}</td>
                  <td>{stop}</td>
                  <td>{stop}</td>
                  <td>{price}</td>
                  <td>0.00</td>
                  <td>0.00</td>
                  <td>
                    <ProfitCell>{profit}<button aria-label="Fechar ordem"><Cross color="#999" /></button></ProfitCell>
                  </td>
                  <td className="word">EA MULTIMOEDAS</td>
                </tr>
              ))}
            </tbody>
            <tfoot>
              <tr>
                <td colSpan={11}>
                  <IconCell>
                    <BalanceIcon />
                    {'Saldo: 54 953.79 USD  Capital Líquido: 54 915.89  Margem: 114.13  Margem liberada: 54 801.76  Nível da margem: 48118.37%'}
                  </IconCell>
                </td>
                <td><ProfitCell $total>-37.90</ProfitCell></td>
                <td />
              </tr>
            </tfoot>
          </OrdersTable>
          <ScrollBar $w={14}><Chevron up /><Thumb $h={78} $end /><Chevron /></ScrollBar>
        </TerminalBody>
        <TabRow>
          {terminalTabs.map(([name, count]) => (
            <Tab key={name} $active={name === tab} onClick={() => setTab(name)}>
              {name}{count && <sub>{count}</sub>}
            </Tab>
          ))}
        </TabRow>
      </TerminalMain>
      <RedFrame />
    </Terminal>
  );
};

const App = () => (
  <Window>
    <GlobalStyle />
    <MenuBar>
      <LogoIcon />
      {menus.map((m, i) => <MenuItem key={m} $first={i === 0}>{m}</MenuItem>)}
      <WindowButtons>
        <button aria-label="Minimizar"><Icon w={8} h={8}><path d="M1 6.500h6" stroke="#8495a5" strokeWidth="2" /></Icon></button>
        <button aria-label="Restaurar"><Icon w={9} h={9}><path d="M3 3V1h5v4H6M1 4h5v4H1z" stroke="#8495a5" strokeWidth="1.300" /></Icon></button>
        <button aria-label="Fechar"><Cross size={9} color="#8495a5" /></button>
      </WindowButtons>
    </MenuBar>
    <MainToolbar />
    <DrawToolbar />
    <Workspace>
      <SideColumn>
        <MarketWatch />
        <Navigator />
      </SideColumn>
      <Chart />
    </Workspace>
    <TerminalPanel />
  </Window>
);

export default App;
